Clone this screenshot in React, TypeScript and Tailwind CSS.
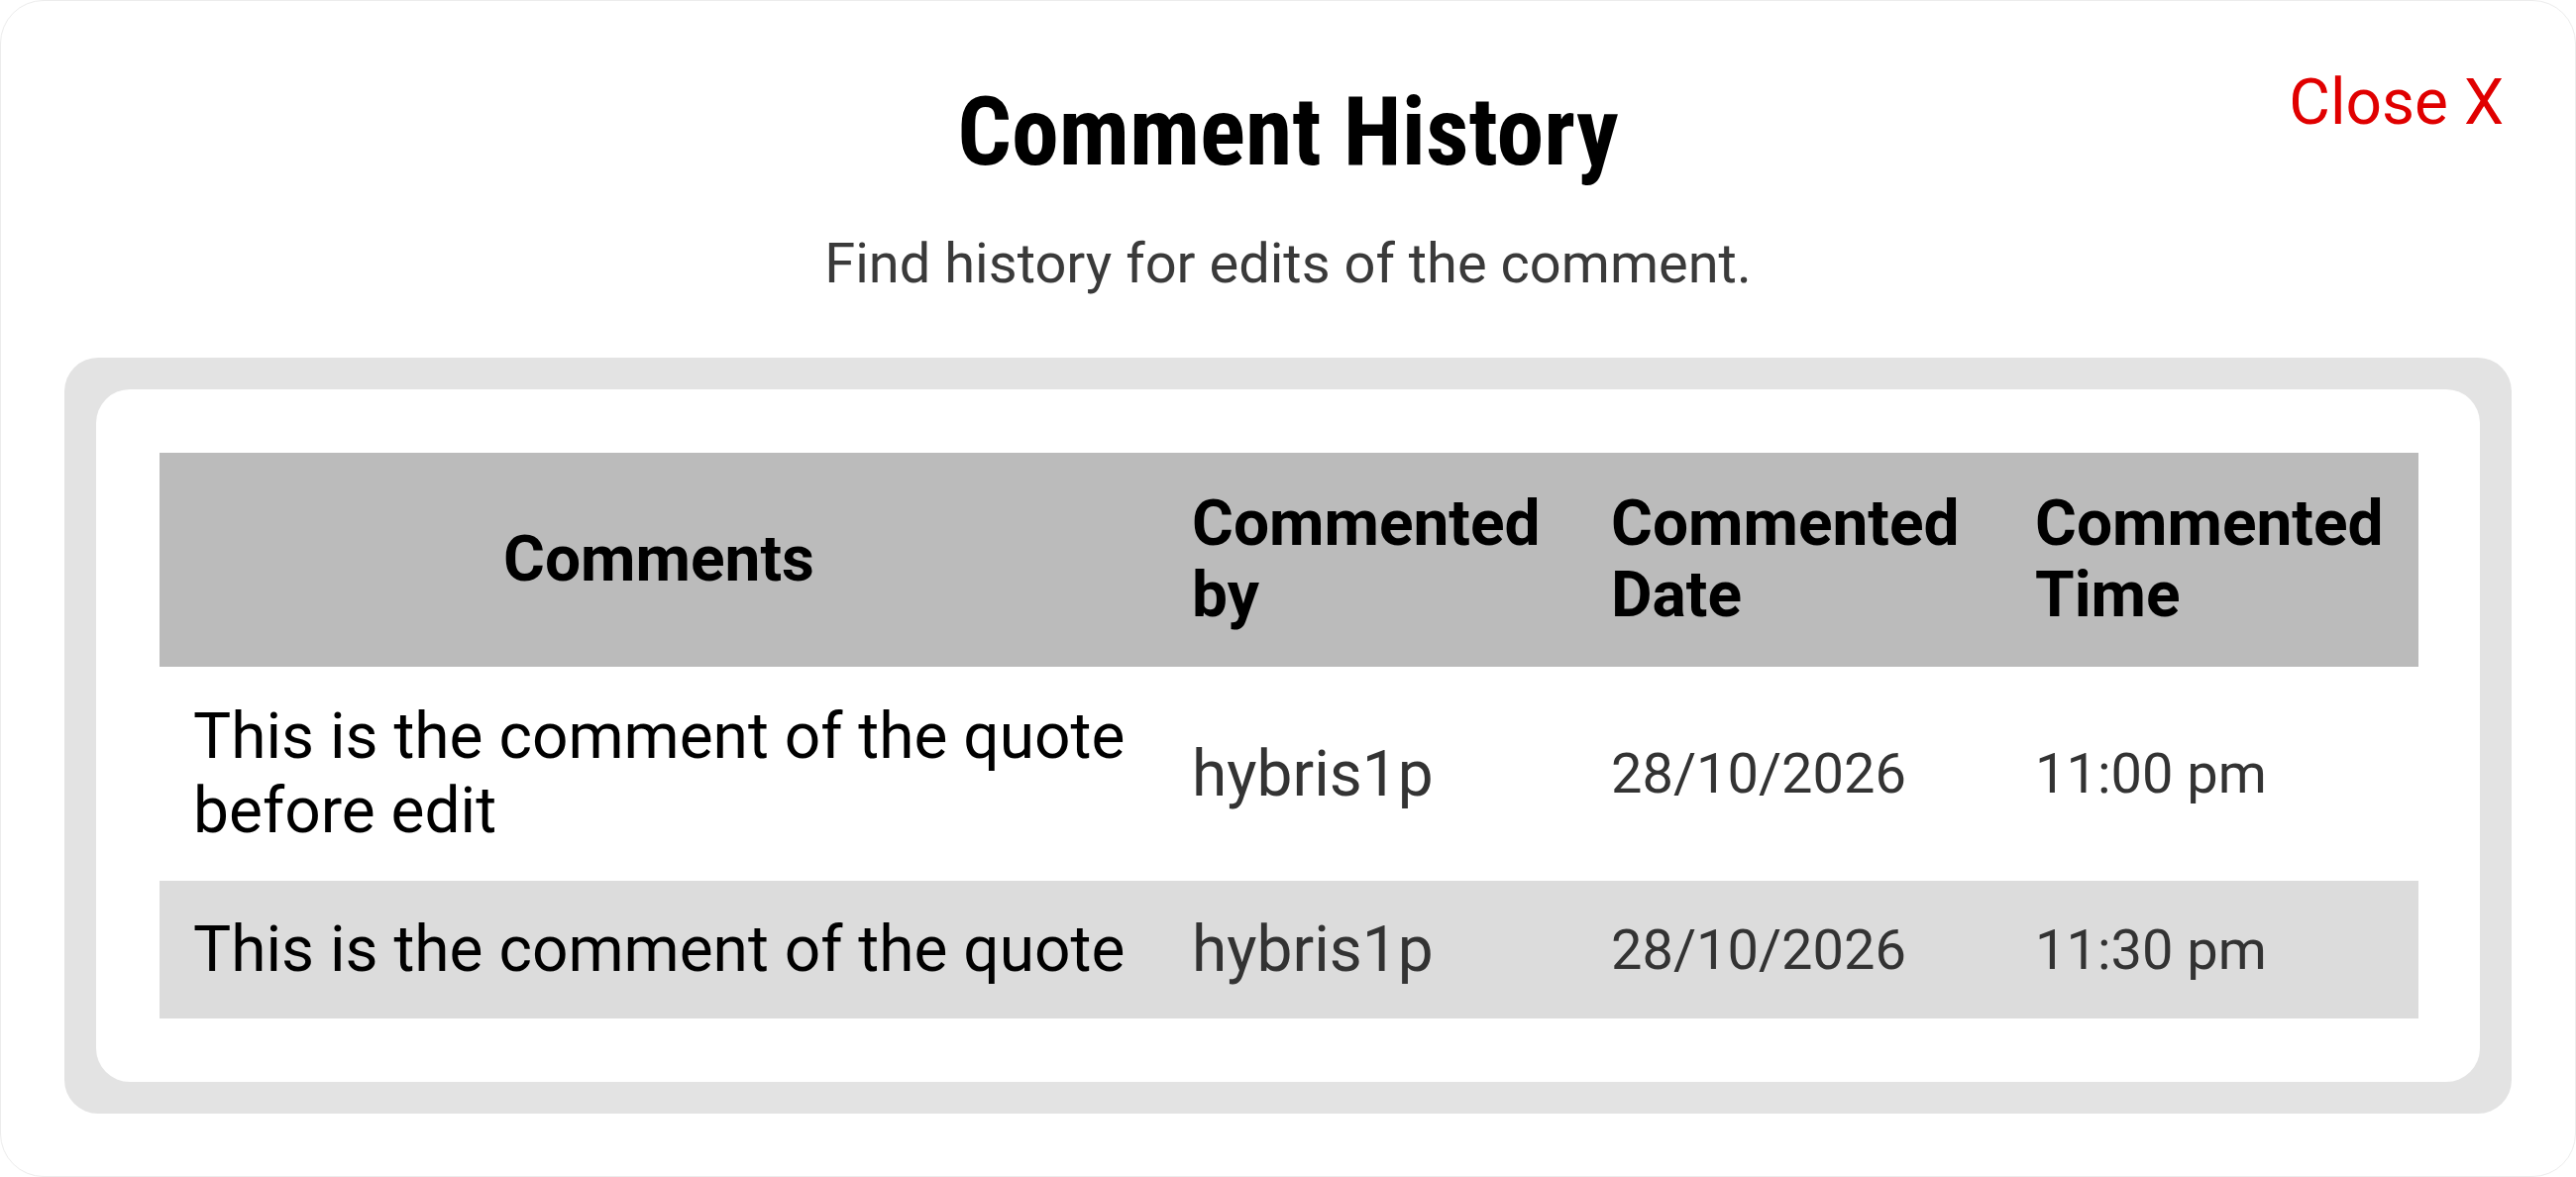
const rows = [
  {
    comment: "This is the comment of the quote before edit",
    by: "hybris1p",
    date: "28/10/2026",
    time: "11:00 pm",
  },
  {
    comment: "This is the comment of the quote",
    by: "hybris1p",
    date: "28/10/2026",
    time: "11:30 pm",
  },
];

export default function App() {
  return (
    <div className="w-[2600px] h-[1188px] bg-white font-['Roboto',sans-serif]">
      <div className="relative flex h-full flex-col rounded-[44px] border border-[#ececec] bg-white px-16 pt-[76px]">
        <button className="absolute right-[72px] top-[65px] text-[64px] leading-[75px] text-[#e00000]">
          Close X
        </button>

        <h1 className="text-center text-[96px] font-bold leading-[112px] text-black [font-stretch:82%]">
          Comment History
        </h1>
        <p className="mt-[44px] text-center text-[56px] leading-[66px] text-[#3a3a3a]">
          Find history for edits of the comment.
        </p>

        <div className="mt-[62px] rounded-[34px] bg-[#e3e3e3] p-8">
          <div className="rounded-[34px] bg-white p-16">
            <table className="w-full table-fixed border-collapse">
              <colgroup>
                <col className="w-[1008px]" />
                <col className="w-[423px]" />
                <col className="w-[428px]" />
                <col className="w-[421px]" />
              </colgroup>
              <thead>
                <tr className="bg-[#bbbbbb] text-[64px] font-bold leading-[72px] text-black">
                  <th className="px-[34px] py-[36px] text-center align-middle font-bold">Comments</th>
                  <th className="px-[34px] py-[36px] text-left align-middle font-bold">Commented by</th>
                  <th className="px-[34px] py-[36px] text-left align-middle font-bold">Commented Date</th>
                  <th className="px-[34px] py-[36px] text-left align-middle font-bold">Commented Time</th>
                </tr>
              </thead>
              <tbody>
                {rows.map((row, i) => (
                  <tr key={i} className={i % 2 === 1 ? "bg-[#dcdcdc]" : "bg-white"}>
                    <td className={`pl-[34px] pr-1 ${i === 0 ? "py-[33px]" : "py-8"} align-middle text-[64px] leading-[75px] text-black`}>
                      {row.comment}
                    </td>
                    <td className="px-[34px] align-middle text-[64px] leading-[75px] text-[#333333]">{row.by}</td>
                    <td className="px-[34px] align-middle text-[56px] leading-[66px] text-[#333333]">{row.date}</td>
                    <td className="px-[34px] align-middle text-[56px] leading-[66px] text-[#333333]">{row.time}</td>
                  </tr>
                ))}
              </tbody>
            </table>
          </div>
        </div>
      </div>
    </div>
  );
}
